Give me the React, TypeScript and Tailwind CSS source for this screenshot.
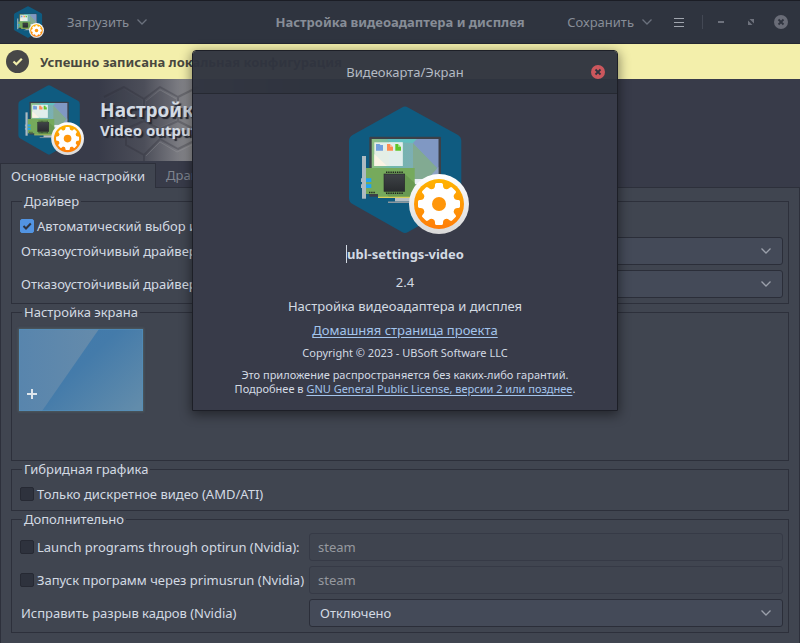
import type { ReactNode } from 'react';

const TEETH = [0, 45, 90, 135, 180, 225, 270, 315];

function AppIcon({ id, className }: { id: string; className: string }) {
  return (
    <svg viewBox="0 0 128 128" className={className} aria-hidden="true">
      <defs>
        <linearGradient id={`${id}-ring`} x1="0" y1="0" x2="0" y2="1">
          <stop offset="0" stopColor="#ffffff" />
          <stop offset="1" stopColor="#d9d9d9" />
        </linearGradient>
        <linearGradient id={`${id}-orange`} x1="0" y1="0" x2="0" y2="1">
          <stop offset="0" stopColor="#ffb400" />
          <stop offset="1" stopColor="#ff7d0a" />
        </linearGradient>
        <linearGradient id={`${id}-chip`} x1="0" y1="0" x2="0" y2="1">
          <stop offset="0" stopColor="#3f4347" />
          <stop offset="1" stopColor="#292c2f" />
        </linearGradient>
        <linearGradient id={`${id}-screen`} x1="0" y1="0" x2="1" y2="0">
          <stop offset="0" stopColor="#8fbf80" />
          <stop offset="0.3" stopColor="#6fb8ad" />
          <stop offset="0.65" stopColor="#7eaeb4" />
          <stop offset="1" stopColor="#7f97c4" />
        </linearGradient>
      </defs>
      <path
        d="M61 1.500Q64 -.5 67 1.500L117 29Q120.300 31 120.300 35V92Q120.300 96 117 98L67 126Q64 128 61 126L11.500 98Q8 96 8 92V35Q8 31 11.500 29Z"
        fill="#0f5b80"
      />
      <rect x="28.300" y="30.700" width="71.700" height="60" rx="1" fill="#3c4048" />
      <rect x="30.700" y="33" width="66.600" height="50" fill={`url(#${id}-screen)`} />
      <path d="M46 33H76L72 37L50 36Z" fill="#61c0c0" />
      <path d="M72 37L97.300 63V83H72Z" fill="#82aa92" />
      <path d="M72 37L76 33H97.300V63Z" fill="#8098c3" />
      <path d="M97.300 61V83H78Z" fill="#8da2c6" />
      <path d="M73 73H90V78H73Z" fill="#e8eef4" />
      <rect x="33.300" y="36.300" width="28.400" height="23.700" fill="#eaf0ea" opacity=".95" />
      <path d="M33.300 48L46 60H33.300Z" fill="#fbf3e4" />
      <path d="M48 36.300H61.700V60H48Z" fill="#e0eeee" opacity=".7" />
      <path d="M35 38H38.500L39.500 39H42V44.700H35Z" fill="#729fdc" />
      <path d="M46 38H49L52 41V44.700H46Z" fill="#ff8b50" />
      <path d="M54.300 38H57L60 41V44.700H54.300Z" fill="#5fc42b" />
      <path d="M49 38L52 41H49ZM57 38L60 41H57Z" fill="#fff" opacity=".35" />
      <path d="M54 92H72V95.500H54Z" fill="#b7bfc4" />
      <path d="M47 95.500H76V97H47Z" fill="#8d989f" />
      <path d="M25 62H73.700V91H37V88H25Z" fill="#76aa5c" />
      <path d="M63.700 68L73.700 77V91H48L43 85.300Z" fill="#699a52" />
      <path d="M37 90.700H75V92H37Z" fill="#d8cf5a" />
      <rect x="21" y="50" width="4" height="42.700" fill="#adbac1" />
      <path d="M25 72.300H30.300V76H25ZM25 78.200H30.300V82H25Z" fill="#1fa4f5" />
      <path d="M20 72.300H21.500V76H20ZM20 78.200H21.500V82H20Z" fill="#adbac1" />
      <rect x="43" y="68" width="20.700" height="17.300" fill={`url(#${id}-chip)`} stroke="#25282b" strokeWidth=".6" />
      <path d="M45 66.200H62M45 87.200H62M28 86.500H34.500" stroke="#20251f" strokeWidth="1.600" strokeDasharray="1.400 .8" />
      <circle cx="98" cy="98" r="30" fill={`url(#${id}-ring)`} />
      <circle cx="98" cy="98" r="25" fill={`url(#${id}-orange)`} />
      <g fill="#fff">
        <circle cx="98" cy="98" r="16" />
        {TEETH.map((angle) => (
          <path
            key={angle}
            d="M91 83.500Q94 82.500 94 79.500V78.500Q94.200 77 95.500 77H100.500Q101.800 77 102 78.500V79.500Q102 82.500 105 83.500L98 92Z"
            transform={`rotate(${angle} 98 98)`}
          />
        ))}
      </g>
      <circle cx="98" cy="98" r="7" fill="#ff960a" />
    </svg>
  );
}

function Chevron({ className }: { className: string }) {
  return (
    <svg viewBox="0 0 10 6" className={`h-[6px] w-[10px] ${className}`} fill="none" stroke="currentColor" strokeWidth="1.300" aria-hidden="true">
      <path d="M.5.5L5 5L9.500.5" />
    </svg>
  );
}

function CloseGlyph({ disc }: { disc: string }) {
  return (
    <svg viewBox="0 0 14 14" className="size-[14px]" aria-hidden="true">
      <circle cx="7" cy="7" r="7" fill={disc} />
      <path d="M4.500 4.500L9.500 9.500M9.500 4.500L4.500 9.500" stroke="#2f343f" strokeWidth="1.800" />
    </svg>
  );
}

function TitleBar() {
  return (
    <header className="grid h-[44px] grid-cols-[1fr_auto_1fr] items-center border-t border-b border-t-[#1b1d25] border-b-[#252832] bg-[#2f343f] text-[#878d97]">
      <div className="flex items-center pl-3">
        <AppIcon id="bar" className="size-8" />
        <button type="button" className="ml-[23px] flex items-center gap-2">
          Загрузить
          <Chevron className="text-[#6b717d]" />
        </button>
      </div>
      <h1 className="font-bold">Настройка видеоадаптера и дисплея</h1>
      <div className="flex items-center justify-end pr-3">
        <button type="button" className="mr-[22px] flex items-center gap-2">
          Сохранить
          <Chevron className="text-[#6b717d]" />
        </button>
        <button type="button" aria-label="Меню" className="flex w-[10px] flex-col gap-[3px]">
          <span className="h-px bg-[#a0a5ae]" />
          <span className="h-px bg-[#a0a5ae]" />
          <span className="h-px bg-[#a0a5ae]" />
        </button>
        <span className="ml-[18px] h-[14px] w-px bg-[#434854]" />
        <button type="button" aria-label="Свернуть" className="ml-[15px] h-[2px] w-[6px] bg-[#6e727d]" />
        <button type="button" aria-label="Развернуть" className="ml-6">
          <svg viewBox="0 0 6 6" className="size-[6px]" fill="#6e727d">
            <path d="M1.500 0H6V4.500ZM0 1.500V6H4.500Z" />
          </svg>
        </button>
        <button type="button" aria-label="Закрыть окно" className="ml-[20px]">
          <CloseGlyph disc="#696c77" />
        </button>
      </div>
    </header>
  );
}

function InfoBar() {
  return (
    <div role="status" className="flex h-[35px] items-center gap-[11px] bg-[#f3efab] pl-[6px] font-bold text-[#49483f]">
      <svg viewBox="0 0 23 23" className="size-[23px]" aria-hidden="true">
        <circle cx="11.500" cy="11.500" r="11.500" fill="#474747" />
        <path d="M7.500 11.500L10.300 14.200L15.800 8.700" fill="none" stroke="#f3efab" strokeWidth="2.200" />
      </svg>
      Успешно записана локальная конфигурация
    </div>
  );
}

function Banner() {
  return (
    <div className="grid h-[82px] overflow-hidden bg-[#383b49] *:col-start-1 *:row-start-1">
      <svg viewBox="0 0 300 82" className="h-[82px] w-[300px]" aria-hidden="true">
        <defs>
          <linearGradient id="banner-fade">
            <stop offset=".33" stopColor="#383b49" />
            <stop offset=".48" stopColor="#4c4e59" />
            <stop offset=".56" stopColor="#6c6d75" />
            <stop offset=".65" stopColor="#929295" />
            <stop offset="1" stopColor="#383b49" />
          </linearGradient>
        </defs>
        <rect width="300" height="82" fill="url(#banner-fade)" />
        <g fill="none" strokeLinejoin="round">
          <path
            d="M104 18L124 8L144 20M144 20L160 8L178 18L198 8M144 20V42L160 50L178 42V18M144 42L126 50M126 50V66L144 76V82M144 76L160 60L178 70L198 60M178 42L198 52"
            stroke="#272934"
            strokeOpacity=".28"
            strokeWidth="2"
          />
          <path
            d="M146 22L160 11L176 20M146 77L160 63L177 73L198 63"
            stroke="#c5c6ca"
            strokeOpacity=".18"
          />
        </g>
        <path d="M146 21L160 11L176 20V41L160 48L146 41Z" fill="#2b2d38" fillOpacity=".14" />
        <path d="M100 24L123 10L142 21V42L124 50L100 40Z" fill="#2b2d38" fillOpacity=".1" />
      </svg>
      <div className="flex items-center gap-[16px] pl-[14px]">
        <AppIcon id="banner" className="size-[70px]" />
        <div className="font-bold text-[#d3dae3] [text-shadow:2px_2px_1px_#23252e]">
          <p className="text-[19px] leading-[20px]">Настройка видеоадаптера</p>
          <p className="text-[15px] leading-[20px]">Video output</p>
        </div>
      </div>
    </div>
  );
}

function Group({ title, className = '', children }: { title: string; className?: string; children: ReactNode }) {
  return (
    <fieldset className={`min-w-0 border border-[#2d303b] pr-[5px] pl-2 ${className}`}>
      <legend className="ml-[2px] px-[2px] leading-[17px]">{title}</legend>
      {children}
    </fieldset>
  );
}

function Check({ label, checked = false }: { label: string; checked?: boolean }) {
  return (
    <label className="flex h-[22px] items-center gap-[3px] whitespace-nowrap">
      <span className="grid size-[14px] shrink-0 *:col-start-1 *:row-start-1">
        <input
          type="checkbox"
          defaultChecked={checked}
          className="peer size-[14px] appearance-none rounded-[2px] border border-[#262933] bg-[#2e323d] checked:border-[#5294e2] checked:bg-[#5294e2]"
        />
        <svg viewBox="0 0 14 14" className="pointer-events-none hidden size-[14px] peer-checked:block" fill="none" stroke="#2f343f" strokeWidth="2">
          <path d="M3.500 7L6 9.500L10.800 4.500" />
        </svg>
      </span>
      {label}
    </label>
  );
}

function Combo({ id, options }: { id: string; options: string[] }) {
  return (
    <div className="relative h-7">
      <select id={id} className="h-7 w-full appearance-none rounded-[3px] border border-[#2b2e39] bg-[#444a58] pr-8 pl-[10px]">
        {options.map((option) => (
          <option key={option}>{option}</option>
        ))}
      </select>
      <Chevron className="pointer-events-none absolute top-[11px] right-3 text-[#9ba0ab]" />
    </div>
  );
}

function Entry({ label }: { label: string }) {
  return (
    <input
      type="text"
      aria-label={label}
      defaultValue="steam"
      disabled
      className="h-7 w-full rounded-[3px] border border-[#363a46] bg-[#3f444f] px-2 text-[#96999f]"
    />
  );
}

function SettingsPage() {
  const grid = 'grid grid-cols-[289px_minmax(0,1fr)] items-center gap-y-[5px]';
  return (
    <main className="border-x border-[#2d303b] bg-[#404550] px-[10px] pt-[5px] pb-[10px]">
      <Group title="Драйвер" className="pt-[5px] pb-[5px]">
        <Check label="Автоматический выбор и установка" checked />
        <div className={grid}>
          <label htmlFor="driver-main" className="pl-px">Отказоустойчивый драйвер</label>
          <Combo id="driver-main" options={['']} />
          <label htmlFor="driver-extra" className="pl-px">Отказоустойчивый драйвер</label>
          <Combo id="driver-extra" options={['']} />
        </div>
      </Group>
      <Group title="Настройка экрана" className="min-h-[157px] pt-2">
        <button type="button" aria-label="Добавить экран" className="-ml-px block shadow-[0_0_2px_1px_#4c5a62]">
          <svg viewBox="0 0 124 82" className="h-[82px] w-[124px]">
            <defs>
              <linearGradient id="display" x1="0" y1=".2" x2="1" y2=".9">
                <stop offset="0" stopColor="#3f79ac" />
                <stop offset=".45" stopColor="#447baa" />
                <stop offset="1" stopColor="#628cab" />
              </linearGradient>
              <linearGradient id="display-glare">
                <stop offset="0" stopColor="#5885ad" />
                <stop offset="1" stopColor="#658bab" />
              </linearGradient>
            </defs>
            <rect width="124" height="82" fill="url(#display)" />
            <path d="M0 0H80L23 82H0Z" fill="url(#display-glare)" />
            <rect x=".5" y=".5" width="123" height="81" fill="none" stroke="#5190bd" strokeOpacity=".6" />
            <path d="M8 65H18M13 60V70" stroke="#dfe6ec" strokeWidth="2" />
          </svg>
        </button>
      </Group>
      <Group title="Гибридная графика" className="pt-[5px] pb-[5px]">
        <Check label="Только дискретное видео (AMD/ATI)" />
      </Group>
      <Group title="Дополнительно" className="pt-[5px] pb-[5px]">
        <div className={grid}>
          <Check label="Launch programs through optirun (Nvidia):" />
          <Entry label="Программа для optirun" />
          <Check label="Запуск программ через primusrun (Nvidia)" />
          <Entry label="Программа для primusrun" />
          <label htmlFor="tearing" className="pl-px">Исправить разрыв кадров (Nvidia)</label>
          <Combo id="tearing" options={['Отключено', 'Включено']} />
        </div>
      </Group>
    </main>
  );
}

function AboutDialog() {
  return (
    <div
      role="dialog"
      aria-label="Видеокарта/Экран"
      className="w-[426px] rounded-t-[4px] border border-[#1d1f27] text-[#d3dae3] shadow-[0_3px_12px_1px_rgba(0,0,0,0.45)]"
    >
      <div className="grid h-[43px] grid-cols-[1fr_auto_1fr] items-center rounded-t-[3px] border-b border-[#262932] bg-[#2f343f]/97 text-[#b4bac4]">
        <h2 className="col-start-2">Видеокарта/Экран</h2>
        <button type="button" aria-label="Закрыть" className="mr-3 justify-self-end">
          <CloseGlyph disc="#cc575d" />
        </button>
      </div>
      <div className="flex flex-col items-center bg-[#383b49] pt-3 pb-[14px]">
        <AppIcon id="about" className="size-32" />
        <p className="mt-[11px] border-l border-[#d3dae3] leading-[18px] font-bold">ubl-settings-video</p>
        <p className="mt-[10px] leading-[18px]">2.4</p>
        <p className="mt-[6px] leading-[18px]">Настройка видеоадаптера и дисплея</p>
        <a href="#project" className="mt-[6px] leading-[18px] text-[#a3c4ec] underline underline-offset-2">
          Домашняя страница проекта
        </a>
        <p className="mt-[7px] text-[11px] leading-[14px]">Copyright © 2023 - UBSoft Software LLC</p>
        <p className="mt-[8px] text-center text-[11px] leading-[14px]">
          Это приложение распространяется без каких-либо гарантий.
          <br />
          Подробнее в{' '}
          <a href="#license" className="text-[#a3c4ec] underline underline-offset-2">
            GNU General Public License, версии 2 или позднее
          </a>
          .
        </p>
      </div>
    </div>
  );
}

export default function App() {
  return (
    <div className="relative min-h-screen bg-[#404550] font-['Noto_Sans',sans-serif] text-[13px] leading-[18px] text-[#d3dae3]">
      <TitleBar />
      <InfoBar />
      <Banner />
      <nav className="flex h-[27px] items-end bg-[#383b49]">
        <button type="button" className="h-[25px] border-t border-x border-[#2d303b] bg-[#404550] px-[10px]">
          Основные настройки
        </button>
        <div className="flex h-[25px] flex-1 items-center border-b border-[#2d303b] pl-[10px] text-[#7f8590]">
          <button type="button">Драйвер</button>
        </div>
      </nav>
      <SettingsPage />
      <div className="absolute inset-x-0 top-[50px] flex justify-center pl-[10px]">
        <AboutDialog />
      </div>
    </div>
  );
}
